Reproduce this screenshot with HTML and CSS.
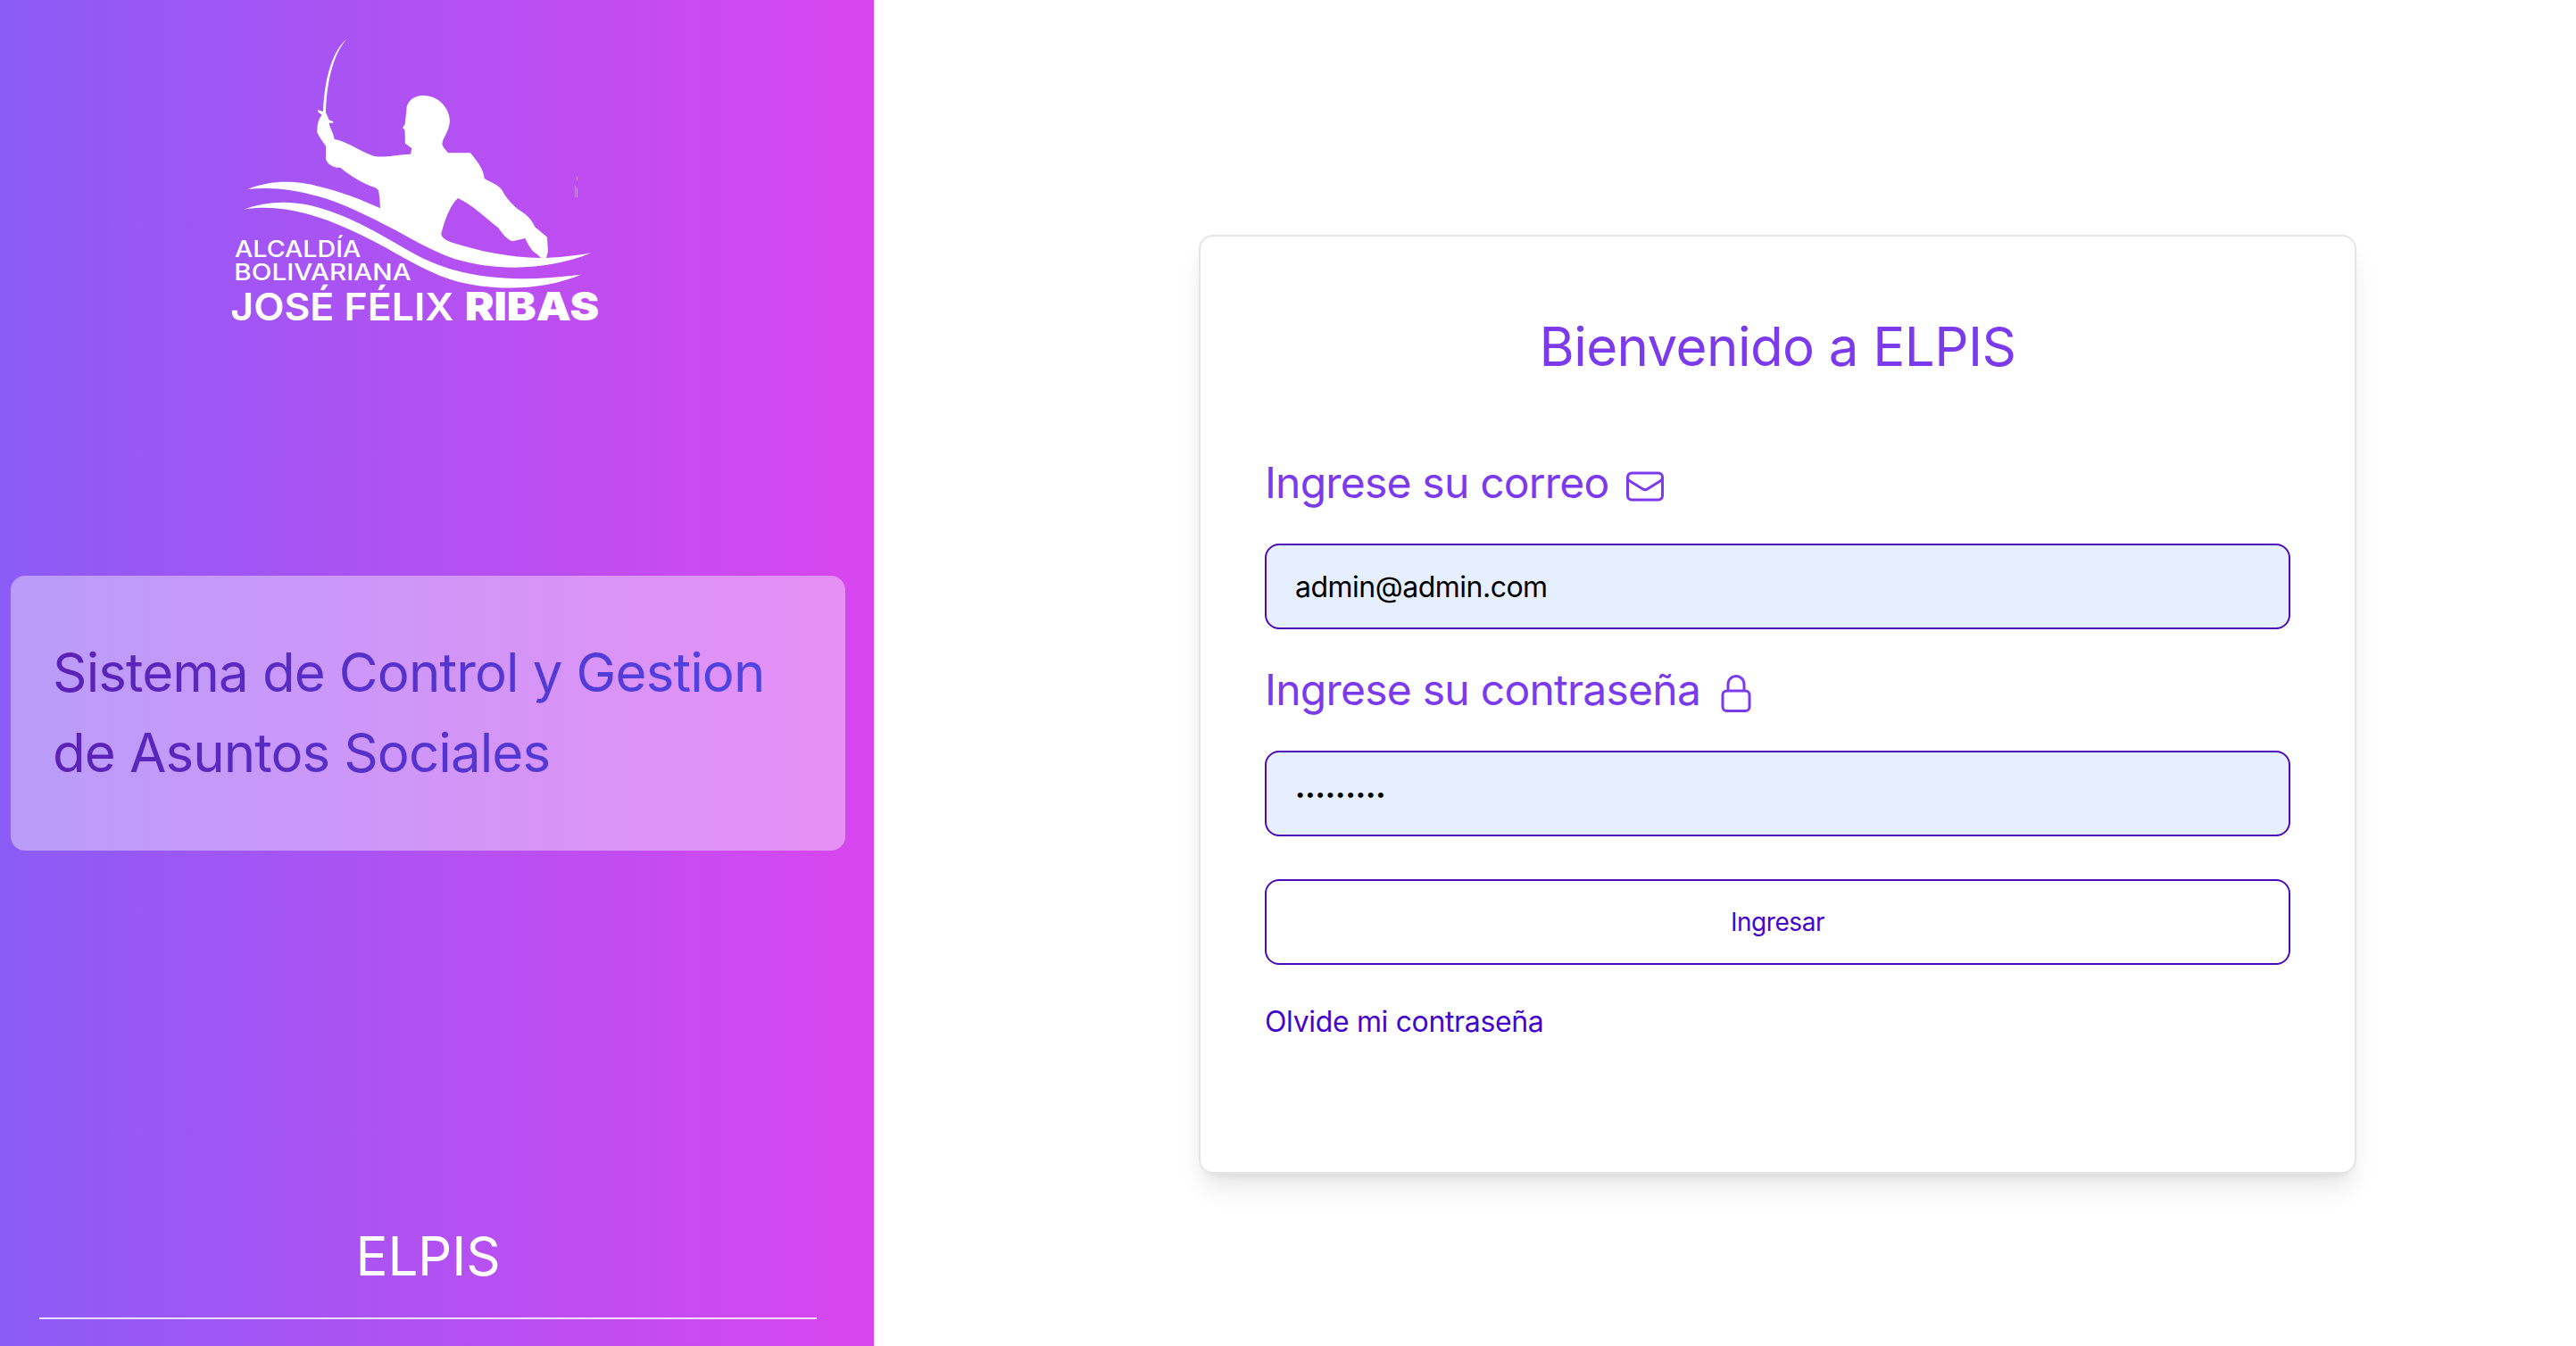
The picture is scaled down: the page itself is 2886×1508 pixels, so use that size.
FILE: index.html
```html
<!DOCTYPE html>
<html lang="es">
<head>
<meta charset="utf-8">
<title>ELPIS</title>
<link rel="stylesheet" href="styles.css">
</head>
<body>
<aside class="sidebar">
  <svg class="logo" viewBox="0 0 1350 1080" role="img" aria-label="Alcaldía Bolivariana José Félix Ribas">
    <path d="M446 70C387 122 369 230 366 320L375 322C378 222 396 128 446 70Z"/>
    <path d="M375 318L386 343L400 349L399 353H386C388 370 400 383 404 408C440 412 485 446 535 464C570 472 600 461 660 458L664 439L642 422C641 401 642 390 640 376L633 370L641 358C643 340 645 325 647 300C653 275 675 261 704 261C754 262 791 303 792 347C789 384 768 402 766 424C770 439 780 445 786 454H861C880 478 906 508 908 540C930 554 952 558 968 580C980 605 1000 625 1020 643C1050 660 1068 680 1078 703L1119 737L1122 785L1116 807C1160 805 1215 800 1267 790C1120 850 950 853 805 809C720 780 640 728 556 686L542 640H558L556 606L552 580L542 571C505 560 455 530 424 503H411C395 500 380 490 375 475V431C367 418 353 403 346 385C345 360 350 340 362 326L350 317L348 309L366 315ZM819 606C789 635 772 690 763 725C764 742 785 750 805 757C890 784 990 806 1098 807L1086 795C1067 785 1055 762 1045 741L1003 751C985 747 968 725 955 706C912 672 870 630 819 606Z" fill-rule="evenodd"/>
    <path d="M112 576C190 545 270 545 350 566C430 585 500 613 558 640L640 700L600 708C520 668 430 622 350 600C260 575 190 568 112 576Z"/>
    <path d="M98 644C190 610 290 612 390 650C515 694 610 762 705 810C870 887 1040 886 1233 863C1100 918 930 920 795 880C695 847 600 781 500 733C380 674 240 621 98 644Z"/>
    <path d="M1218 533h2v12h-2zM1213 565h1.5v38h-1.5zM1218 572h2v31h-2z" opacity=".6"/>
    <text class="logo-small" x="69" y="803" textLength="424" lengthAdjust="spacingAndGlyphs">ALCALDÍA</text>
    <text class="logo-small" x="67" y="881" textLength="595" lengthAdjust="spacingAndGlyphs">BOLIVARIANA</text>
    <text class="logo-name" x="55" y="1017" textLength="750" lengthAdjust="spacingAndGlyphs">JOSÉ FÉLIX</text>
    <text class="logo-heavy" x="842" y="1017" textLength="452" lengthAdjust="spacingAndGlyphs">RIBAS</text>
  </svg>
  <section class="tagline">
    <h1 class="tagline-text"><span class="line-one">Sistema de Control y Gestion</span><span class="line-two">de Asuntos Sociales</span></h1>
  </section>
  <footer class="brand">ELPIS</footer>
</aside>
<main class="content">
  <form class="card">
    <h2 class="title">Bienvenido a ELPIS</h2>
    <label class="label label-mail" for="mail">Ingrese su correo
      <svg class="icon" viewBox="0 0 24 24"><path d="M21.75 6.75v10.5a2.25 2.25 0 0 1-2.25 2.25h-15a2.25 2.25 0 0 1-2.25-2.25V6.75m19.5 0A2.25 2.25 0 0 0 19.5 4.5h-15a2.25 2.25 0 0 0-2.25 2.25m19.5 0v.243a2.25 2.25 0 0 1-1.07 1.916l-7.5 4.615a2.25 2.25 0 0 1-2.36 0L3.32 8.91a2.25 2.25 0 0 1-1.07-1.916V6.75"/></svg>
    </label>
    <input class="field" id="mail" type="email" value="admin@admin.com">
    <label class="label label-pass" for="pass">Ingrese su contraseña
      <svg class="icon" viewBox="0 0 24 24"><path d="M16.5 10.5V6.75a4.5 4.5 0 1 0-9 0v3.75m-.75 11.25h10.5a2.25 2.25 0 0 0 2.25-2.25v-6.75a2.25 2.25 0 0 0-2.25-2.25H6.75a2.25 2.25 0 0 0-2.25 2.25v6.75a2.25 2.25 0 0 0 2.25 2.25Z"/></svg>
    </label>
    <input class="field field-pass" id="pass" type="password" value="123456789">
    <button class="submit" type="button">Ingresar</button>
    <a class="forgot">Olvide mi contraseña</a>
  </form>
</main>
</body>
</html>
```
FILE: styles.css
```css
* { box-sizing: border-box; }
body {
  margin: 0;
  display: flex;
  height: 1508px;
  overflow: hidden;
  background: #fff;
  font-family: Inter, "Liberation Sans", sans-serif;
}
h1, h2 { margin: 0; font-weight: 400; }

.sidebar {
  width: 979px;
  padding: 20px 32px 0 12px;
  display: flex;
  flex-direction: column;
  background: linear-gradient(to right, #8b5cf6, #d946ef);
}
.logo { width: 450px; height: 360px; margin-left: 228px; fill: #fff; flex: none; }
.logo-small { font-size: 77px; font-weight: 500; }
.logo-name { font-size: 127px; font-weight: 600; }
.logo-heavy { font-size: 130px; font-weight: 900; }
.tagline {
  height: 308px;
  margin-top: 265px;
  padding: 63px 47px 0;
  border-radius: 16px;
  background: rgba(255, 255, 255, .4);
}
.tagline-text {
  font-size: 60px;
  line-height: 90px;
  color: transparent;
  background: linear-gradient(to right, #5b21b6, #4f46e5);
  background-clip: text;
  -webkit-background-clip: text;
}
.tagline-text span { display: block; white-space: nowrap; }
.line-one { letter-spacing: -.87px; }
.line-two { letter-spacing: -.9px; }
.brand {
  height: 116px;
  margin: 409px 32px 0;
  border-bottom: 2px solid rgba(255, 255, 255, .8);
  text-align: center;
  font-size: 60px;
  line-height: 90px;
  letter-spacing: -.2px;
  color: #fff;
}

.content { flex: 1; padding: 263px 0 0 364px; }
.card {
  width: 1297px;
  height: 1052px;
  padding: 78px 72px 0;
  display: flex;
  flex-direction: column;
  border: 2px solid #e5e5e5;
  border-radius: 16px;
  background: #fff;
  box-shadow: 0 20px 30px -6px rgba(0, 0, 0, .1), 0 8px 12px -8px rgba(0, 0, 0, .1);
}
.title {
  margin-bottom: 72px;
  text-align: center;
  font-size: 60px;
  line-height: 90px;
  letter-spacing: -.55px;
  color: #7c3aed;
}
.label {
  display: flex;
  align-items: center;
  font-size: 48px;
  line-height: 72px;
  color: #7c3aed;
}
.label-mail { gap: 17px; letter-spacing: -.8px; }
.label-pass { gap: 16px; margin-top: 32px; letter-spacing: -.75px; }
.icon {
  width: 48px;
  height: 48px;
  margin-top: 8px;
  fill: none;
  stroke: currentColor;
  stroke-width: 1.5;
  stroke-linecap: round;
  stroke-linejoin: round;
}
.field {
  height: 96px;
  margin: 32px 0 0;
  padding: 0 32px;
  border: 2px solid #4b0bb8;
  border-radius: 16px;
  background: #e6efff;
  font: 32px Inter, sans-serif;
  letter-spacing: -.5px;
  color: #000;
}
.field-pass {
  padding-left: 33px;
  font: 16px Lato, sans-serif;
  letter-spacing: 2px;
}
.submit {
  height: 96px;
  margin-top: 48px;
  padding: 0 0 1px;
  border: 2px solid #4b0bb8;
  border-radius: 16px;
  background: #fff;
  font: 28px Inter, sans-serif;
  letter-spacing: -.45px;
  color: #4506cb;
}
.forgot {
  margin-top: 40px;
  font-size: 32px;
  line-height: 48px;
  letter-spacing: -.35px;
  color: #4506cb;
}
```
